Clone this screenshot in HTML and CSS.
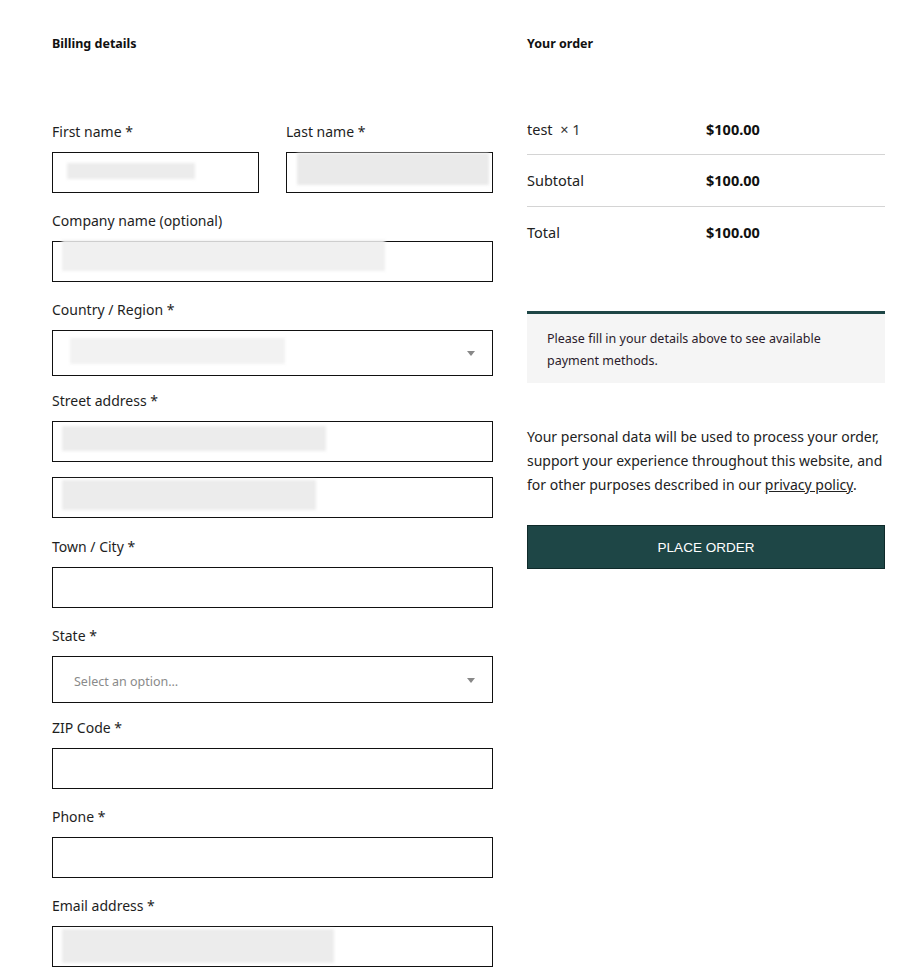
FILE: index.html
```html
<!DOCTYPE html>
<html>
<head>
<meta charset="utf-8">
<link rel="stylesheet" href="styles.css">
</head>
<body>
<div class="page">
  <section class="billing">
    <h3 class="heading">Billing details</h3>
    <div class="row2">
      <div class="field">
        <label class="lbl">First name *</label>
        <div class="box"><span class="blur b-first"></span></div>
      </div>
      <div class="field">
        <label class="lbl">Last name *</label>
        <div class="box"><span class="blur b-last"></span></div>
      </div>
    </div>
    <div class="field">
      <label class="lbl">Company name (optional)</label>
      <div class="box"><span class="blur b-company"></span></div>
    </div>
    <div class="field sel-field">
      <label class="lbl">Country / Region *</label>
      <div class="box select"><span class="blur b-country"></span><span class="caret"></span></div>
    </div>
    <div class="field street">
      <label class="lbl">Street address *</label>
      <div class="box"><span class="blur b-street1"></span></div>
      <div class="box second"><span class="blur b-street2"></span></div>
    </div>
    <div class="field">
      <label class="lbl">Town / City *</label>
      <div class="box"></div>
    </div>
    <div class="field sel-field">
      <label class="lbl">State *</label>
      <div class="box select state"><span class="ph">Select an option…</span><span class="caret"></span></div>
    </div>
    <div class="field">
      <label class="lbl">ZIP Code *</label>
      <div class="box"></div>
    </div>
    <div class="field">
      <label class="lbl">Phone *</label>
      <div class="box"></div>
    </div>
    <div class="field">
      <label class="lbl">Email address *</label>
      <div class="box"><span class="blur b-email"></span></div>
    </div>
  </section>
  <section class="order">
    <h3 class="heading">Your order</h3>
    <table class="items">
      <tr><td>test&nbsp; <span class="qty">×&nbsp;1</span></td><td class="amt">$100.00</td></tr>
      <tr><td>Subtotal</td><td class="amt">$100.00</td></tr>
      <tr><td>Total</td><td class="amt">$100.00</td></tr>
    </table>
    <div class="notice">Please fill in your details above to see available payment methods.</div>
    <p class="privacy">Your personal data will be used to process your order, support your experience throughout this website, and for other purposes described in our <a class="policy" href="#">privacy policy</a>.</p>
    <button class="place">PLACE ORDER</button>
  </section>
</div>
</body>
</html>
```
FILE: styles.css
```css
* { box-sizing: border-box; }
html, body { margin: 0; padding: 0; background: #fff; }
body {
  font-family: "Noto Sans", "Open Sans", sans-serif;
  color: #1a1a1a;
  font-size: 14px;
}
.page {
  display: flex;
  gap: 34px;
  padding: 35px 30px 0 52px;
}
.billing { width: 441px; flex: none; }
.order { width: 358px; flex: none; }
.heading {
  margin: 0;
  font-size: 12.5px;
  font-weight: 700;
  line-height: 18px;
  color: #111;
}
.billing .heading { margin-bottom: 67px; }
.order .heading { margin-bottom: 52px; }
.row2 { display: flex; gap: 27px; }
.row2 .field { flex: 1; }
.field { margin-bottom: 16px; }
.lbl {
  display: block;
  line-height: 22px;
  padding-top: 1px;
  margin-bottom: 9px;
  font-size: 14px;
  color: #1e1e1e;
}
.box {
  position: relative;
  height: 41px;
  border: 1px solid #111;
  background: #fff;
  display: flex;
  align-items: center;
}
.box.second { margin-top: 15px; }
.field.street { margin-bottom: 17px; }
.sel-field { margin-bottom: 13px; }
.box.select { height: 46px; margin-top: 1px; }
.box.state { height: 47px; margin-top: 0; }
.caret {
  position: absolute;
  right: 17px;
  top: 50%;
  margin-top: -2px;
  border-left: 4px solid transparent;
  border-right: 4px solid transparent;
  border-top: 5px solid #888;
}
.ph {
  padding-left: 21px;
  padding-top: 3px;
  font-size: 12.5px;
  color: #8a8a8a;
}
.blur {
  position: absolute;
  background: #ececec;
  filter: blur(1.5px);
}
.b-first { left: 14px; top: 10px; width: 128px; height: 16px; }
.b-last { left: 10px; top: 0px; width: 192px; height: 32px; background: #eaeaea; }
.b-company { left: 9px; top: -2px; width: 323px; height: 31px; background: #f0f0f0; }
.b-country { left: 17px; top: 7px; width: 215px; height: 26px; background: #f2f2f2; }
.b-street1 { left: 9px; top: 4px; width: 264px; height: 25px; }
.b-street2 { left: 9px; top: 2px; width: 254px; height: 30px; }
.b-email { left: 9px; top: 2px; width: 272px; height: 34px; }
.items {
  width: 100%;
  border-collapse: collapse;
  font-size: 14.5px;
}
.items td {
  width: 50%;
  padding: 0;
  height: 52px;
  vertical-align: middle;
  border-bottom: 1px solid #d4d4d4;
  color: #222;
}
.items tr:first-child td { height: 49px; padding-bottom: 1px; }
.items tr:last-child td { border-bottom: none; }
.items .amt { font-weight: 700; color: #111; }
.qty { color: #333; }
.notice {
  margin-top: 53px;
  border-top: 3px solid #1e4646;
  background: #f5f5f5;
  padding: 14px 20px 11px;
  font-size: 12.5px;
  line-height: 22px;
  color: #2a1a2a;
}
.privacy {
  margin: 42px 0 0;
  font-size: 14px;
  line-height: 24px;
  color: #222;
}
.policy { color: #222; text-decoration: underline; }
.place {
  display: block;
  width: 100%;
  margin-top: 28px;
  height: 44px;
  background: #1e4646;
  border: 1px solid #0f2a2a;
  color: #fff;
  font-family: "Liberation Sans", Arial, sans-serif;
  font-size: 13.5px;
  cursor: pointer;
}
```
